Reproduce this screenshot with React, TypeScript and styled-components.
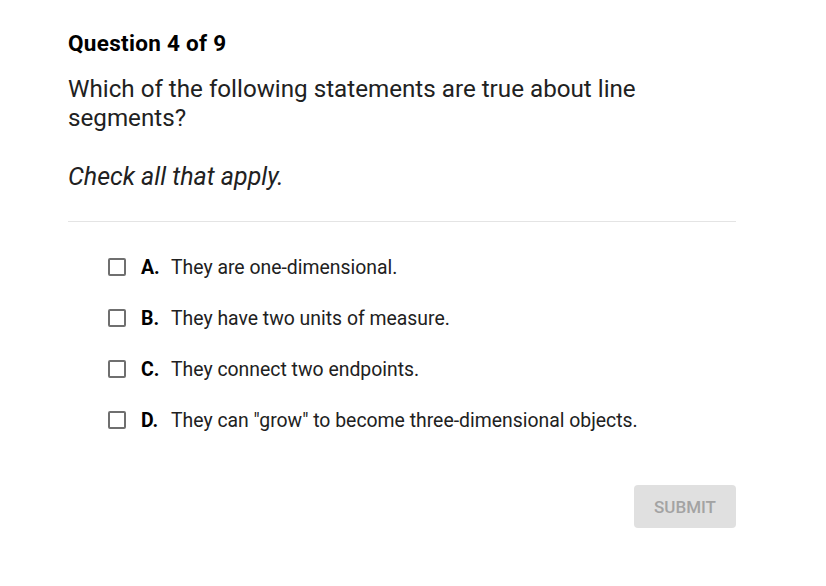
import styled, { createGlobalStyle } from "styled-components";

const GlobalStyle = createGlobalStyle`
  body {
    margin: 0;
    background: #ffffff;
    font-family: Roboto, "Liberation Sans", sans-serif;
    color: #212121;
  }
`;

const options = [
  { letter: "A.", text: "They are one-dimensional." },
  { letter: "B.", text: "They have two units of measure." },
  { letter: "C.", text: "They connect two endpoints." },
  { letter: "D.", text: 'They can "grow" to become three-dimensional objects.' },
];

const App = () => {
  return (
    <>
      <GlobalStyle />
      <Page>
        <Title>Question 4 of 9</Title>
        <Prompt>Which of the following statements are true about line segments?</Prompt>
        <Hint>Check all that apply.</Hint>
        <Divider />
        <OptionList>
          {options.map(({ letter, text }) => (
            <Option key={letter}>
              <Box />
              <Letter>{letter}</Letter>
              <OptionText>{text}</OptionText>
            </Option>
          ))}
        </OptionList>
        <Footer>
          <Submit disabled>SUBMIT</Submit>
        </Footer>
      </Page>
    </>
  );
};

export default App;

const Page = styled.main`
  width: 668px;
  padding: 30px 0 0 68px;
`;

const Title = styled.h1`
  margin: 0;
  font-size: 22.5px;
  line-height: 26px;
  font-weight: 700;
  color: #000;
  letter-spacing: 0.3px;
`;

const Prompt = styled.p`
  margin: 19px 0 0;
  width: 640px;
  font-size: 24.2px;
  line-height: 29px;
  color: #212121;
`;

const Hint = styled.p`
  margin: 29px 0 0;
  font-size: 25px;
  line-height: 29px;
  font-style: italic;
  color: #212121;
`;

const Divider = styled.hr`
  margin: 30px 0 0;
  border: none;
  border-top: 1px solid #e4e4e4;
`;

const OptionList = styled.ul`
  list-style: none;
  margin: 31px 0 0;
  padding: 0 0 0 40px;
  display: flex;
  flex-direction: column;
  gap: 23px;
`;

const Option = styled.li`
  display: flex;
  align-items: center;
  height: 28px;
`;

const Box = styled.span`
  width: 14px;
  height: 14px;
  border: 2px solid #6f6f6f;
  border-radius: 2px;
  flex-shrink: 0;
`;

const Letter = styled.span`
  margin-left: 15px;
  width: 30px;
  font-size: 19.5px;
  font-weight: 700;
  color: #000;
`;

const OptionText = styled.span`
  font-size: 19.4px;
  color: #212121;
`;

const Footer = styled.div`
  display: flex;
  justify-content: flex-end;
  margin-top: 51px;
`;

const Submit = styled.button`
  width: 102px;
  height: 43px;
  border: none;
  border-radius: 4px;
  background: #e0e0e0;
  color: #a3a3a3;
  font-family: Roboto, "Liberation Sans", sans-serif;
  font-size: 17px;
  font-weight: 500;
`;
